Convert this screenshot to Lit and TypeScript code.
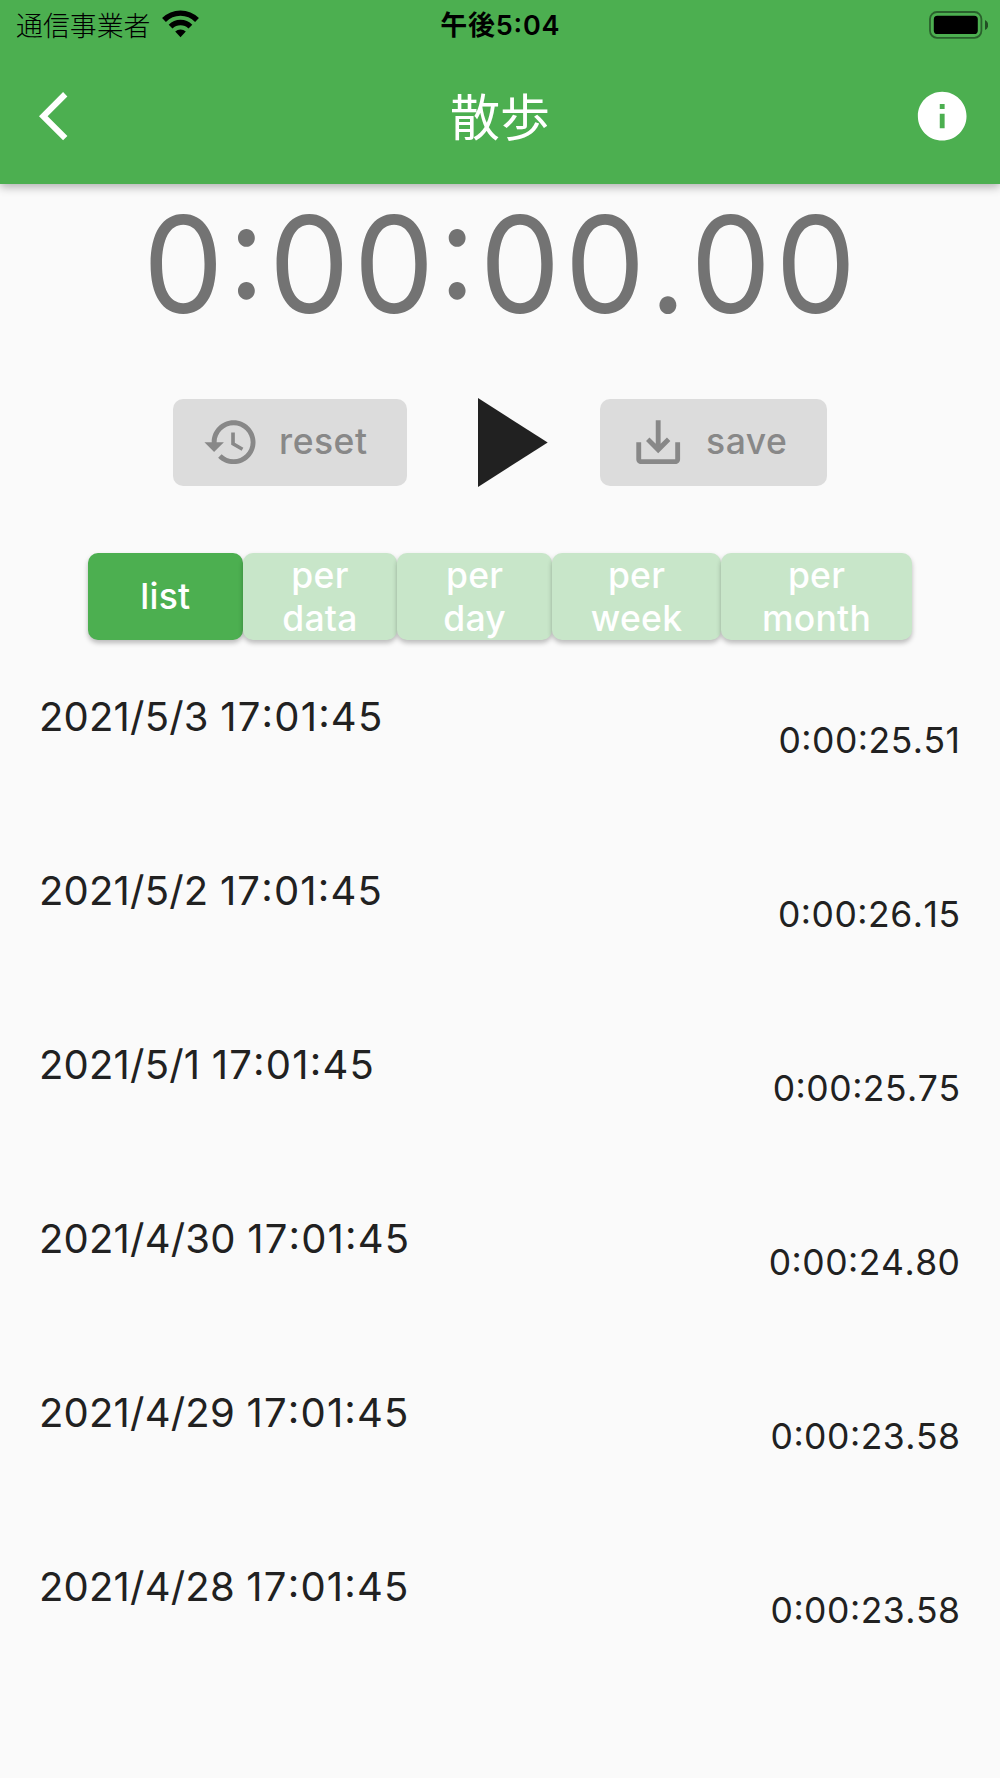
import { LitElement, html, css } from "lit";
import { customElement, property } from "lit/decorators.js";
import { classMap } from "lit/directives/class-map.js";

interface Lap {
  day: string;
  clock: string;
  time: string;
}

const LAPS: Lap[] = [
  { day: "2021/5/3", clock: "17:01:45", time: "0:00:25.51" },
  { day: "2021/5/2", clock: "17:01:45", time: "0:00:26.15" },
  { day: "2021/5/1", clock: "17:01:45", time: "0:00:25.75" },
  { day: "2021/4/30", clock: "17:01:45", time: "0:00:24.80" },
  { day: "2021/4/29", clock: "17:01:45", time: "0:00:23.58" },
  { day: "2021/4/28", clock: "17:01:45", time: "0:00:23.58" },
];

const TABS = ["list", "per data", "per day", "per week", "per month"];

@customElement("status-bar")
class StatusBar extends LitElement {
  static styles = css`
    :host {
      display: grid;
      grid-template-columns: 1fr auto 1fr;
      align-items: center;
      height: 52px;
      padding: 0 12.5px 0 16px;
      color: #000;
      font-family: Inter, "Noto Sans CJK JP", sans-serif;
    }
    .carrier {
      display: flex;
      align-items: center;
      gap: 12px;
      font-size: 26.9px;
      font-weight: 300;
      line-height: 40px;
    }
    .wifi {
      display: block;
      margin-top: -5px;
    }
    .clock {
      margin-left: -3px;
      font-size: 27px;
      font-weight: 600;
      line-height: 40px;
      letter-spacing: 0.8px;
      font-feature-settings: "calt" 1;
    }
    .battery {
      display: block;
      justify-self: end;
      margin-top: -3px;
    }
  `;

  render() {
    return html`
      <div class="carrier">
        <span>通信事業者</span>
        <svg class="wifi" width="37" height="28" viewBox="0 0 37 28">
          <path d="M18.5 27.2 13.2 21.6A7.6 7.6 0 0 1 23.8 21.6Z" />
          <g fill="none" stroke="#000" stroke-width="5.4">
            <path d="M8.6 16.6A14 14 0 0 1 28.4 16.6" />
            <path d="M2 10A23.3 23.3 0 0 1 35 10" />
          </g>
        </svg>
      </div>
      <span class="clock">午後5:04</span>
      <svg class="battery" width="59" height="28" viewBox="0 0 59 28">
        <rect x="1" y="1" width="51.4" height="25.8" rx="7" fill="none" stroke="#000" stroke-opacity=".45" stroke-width="1.8" />
        <rect x="4.8" y="4.8" width="44" height="18.2" rx="3.6" />
        <path d="M56 9A5.5 5.5 0 0 1 56 19Z" fill-opacity=".55" />
      </svg>
    `;
  }
}

@customElement("app-header")
class AppHeader extends LitElement {
  @property() heading = "";

  static styles = css`
    :host {
      display: block;
      height: 183.5px;
      background: #4caf50;
      color: #fff;
      box-shadow: 0 3px 9px rgba(0, 0, 0, 0.3);
    }
    .bar {
      display: grid;
      grid-template-columns: 1fr auto 1fr;
      align-items: center;
      height: 128px;
      padding: 0 29px;
      font-family: "Noto Sans CJK JP", sans-serif;
      fill: currentColor;
    }
    .title {
      padding-bottom: 4px;
      font-size: 50px;
      font-weight: 400;
      line-height: 70px;
    }
    .icon {
      display: block;
    }
    .back {
      margin-left: 9.5px;
    }
    .info {
      justify-self: end;
    }
  `;

  render() {
    return html`
      <status-bar></status-bar>
      <div class="bar">
        <svg class="icon back" width="58.4" height="58.4" viewBox="0 0 24 24">
          <path d="M11.67 3.87 9.9 2.1 0 12l9.9 9.9 1.77-1.77L3.54 12z" />
        </svg>
        <span class="title">${this.heading}</span>
        <svg class="icon info" width="58.4" height="58.4" viewBox="0 0 24 24">
          <path d="M12 2C6.48 2 2 6.48 2 12s4.48 10 10 10 10-4.48 10-10S17.52 2 12 2zm1 15h-2v-6h2v6zm0-8h-2V7h2v2z" />
        </svg>
      </div>
    `;
  }
}

@customElement("timer-controls")
class TimerControls extends LitElement {
  static styles = css`
    :host {
      display: flex;
      align-items: center;
      height: 89px;
      padding: 0 173px 0 172.7px;
      font-family: Inter, sans-serif;
    }
    .button {
      display: flex;
      align-items: center;
      box-sizing: border-box;
      height: 87px;
      padding: 0 0 0 29px;
      border: 0;
      border-radius: 10px;
      background: #dcdcdc;
      color: #888;
      fill: currentColor;
      font: 500 35.5px/44px Inter, sans-serif;
      letter-spacing: 0.5px;
    }
    .reset {
      width: 234.3px;
      gap: 19px;
    }
    .save {
      width: 227.3px;
      gap: 19px;
      margin-left: auto;
    }
    .label {
      padding-bottom: 1px;
    }
    .play {
      display: block;
      margin-left: 71.3px;
      fill: #212121;
    }
  `;

  render() {
    return html`
      <button class="button reset">
        <svg width="58.4" height="58.4" viewBox="0 0 24 24">
          <path d="M13 3c-4.97 0-9 4.03-9 9H1l3.89 3.89.07.14L9 12H6c0-3.87 3.13-7 7-7s7 3.13 7 7-3.13 7-7 7c-1.93 0-3.68-.79-4.94-2.06l-1.42 1.42C8.27 19.99 10.51 21 13 21c4.97 0 9-4.03 9-9s-4.03-9-9-9zm-1 5v5l4.28 2.54.72-1.21-3.5-2.08V8H12z" />
        </svg>
        <span class="label">reset</span>
      </button>
      <svg class="play" width="70" height="89" viewBox="0 0 70 89">
        <path d="M0 0 69.7 44.5 0 89z" />
      </svg>
      <button class="button save">
        <svg width="58.4" height="58.4" viewBox="0 0 24 24">
          <path d="M19 12v7H5v-7H3v7c0 1.1.9 2 2 2h14c1.1 0 2-.9 2-2v-7h-2zm-6 .67 2.59-2.58L17 11.5l-5 5-5-5 1.41-1.41L11 12.67V3h2z" />
        </svg>
        <span class="label">save</span>
      </button>
    `;
  }
}

@customElement("view-tabs")
class ViewTabs extends LitElement {
  @property({ attribute: false }) tabs: string[] = [];
  @property({ type: Number }) active = 0;

  static styles = css`
    :host {
      display: grid;
      grid-template-columns: 154.7px 154.7px 154.7px 169px 191px;
      justify-content: center;
      height: 87px;
    }
    .tab {
      display: flex;
      align-items: center;
      justify-content: center;
      padding: 0 30px;
      border: 0;
      border-radius: 10px;
      background: #c8e6c9;
      color: #fff;
      font: 550 35.5px/43px Inter, sans-serif;
      letter-spacing: 0.25px;
      text-align: center;
      box-shadow: 0 3px 5px rgba(0, 0, 0, 0.26);
    }
    .active {
      background: #4caf50;
    }
  `;

  render() {
    return this.tabs.map(
      (tab, i) => html`
        <button class=${classMap({ tab: true, active: i === this.active })}>${tab}</button>
      `
    );
  }
}

@customElement("lap-row")
class LapRow extends LitElement {
  @property({ attribute: false }) lap: Lap = { day: "", clock: "", time: "" };

  static styles = css`
    :host {
      display: flex;
      justify-content: space-between;
      align-items: flex-start;
      box-sizing: border-box;
      height: 174px;
      padding: 0 39.5px 0 39px;
      color: #212121;
      font-family: Inter, sans-serif;
      font-kerning: none;
      font-feature-settings: "calt" 1;
    }
    .date {
      font-size: 40px;
      line-height: 50px;
      letter-spacing: 0.2px;
    }
    .clock {
      letter-spacing: 1.2px;
    }
    .time {
      padding-top: 24.5px;
      font-size: 35.5px;
      line-height: 50px;
      letter-spacing: 0.5px;
    }
  `;

  render() {
    return html`
      <span class="date">${this.lap.day} <span class="clock">${this.lap.clock}</span></span>
      <span class="time">${this.lap.time}</span>
    `;
  }
}

@customElement("app-root")
class AppRoot extends LitElement {
  static styles = css`
    :host {
      display: flex;
      flex-direction: column;
      box-sizing: border-box;
      height: 1778px;
      overflow: hidden;
      background: #fafafa;
    }
    .elapsed {
      margin-bottom: 54px;
      padding-top: 0.5px;
      color: #737373;
      font: 400 134px/160px Inter, sans-serif;
      font-kerning: none;
      font-feature-settings: "calt" 1;
      letter-spacing: 4.5px;
      text-indent: 3.5px;
      text-align: center;
      white-space: nowrap;
      transform: scaleX(0.953);
    }
    .tabs {
      margin: 66px 0 51.5px;
    }
  `;

  render() {
    return html`
      <app-header heading="散歩"></app-header>
      <div class="elapsed">0:00:00.00</div>
      <timer-controls></timer-controls>
      <view-tabs class="tabs" .tabs=${TABS} .active=${0}></view-tabs>
      ${LAPS.map((lap) => html`<lap-row .lap=${lap}></lap-row>`)}
    `;
  }
}
